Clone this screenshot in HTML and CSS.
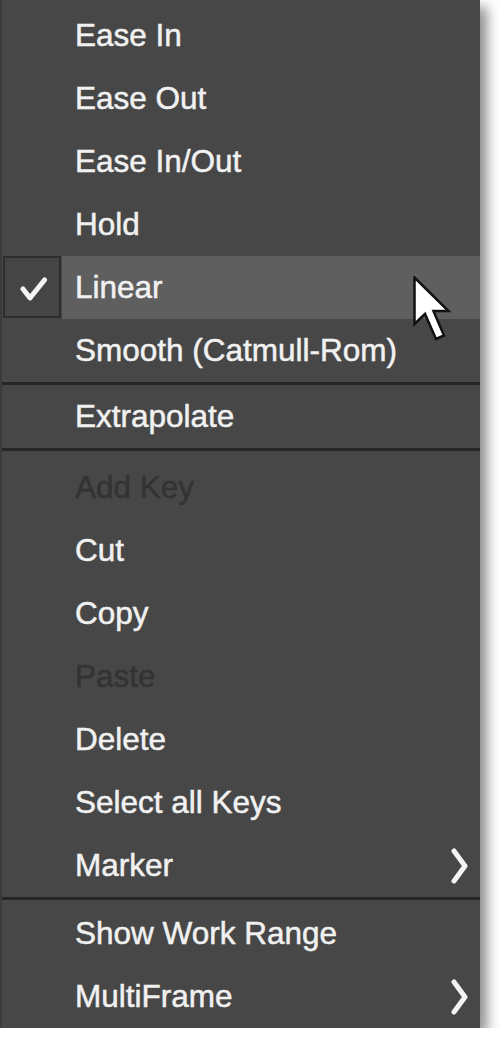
FILE: index.html
```html
<!DOCTYPE html>
<html>
<head>
<meta charset="utf-8">
<link rel="stylesheet" href="styles.css">
</head>
<body>
<div class="menu">
  <div class="item"><span class="icon"></span><span class="label">Ease In</span></div>
  <div class="item"><span class="icon"></span><span class="label">Ease Out</span></div>
  <div class="item"><span class="icon"></span><span class="label">Ease In/Out</span></div>
  <div class="item"><span class="icon"></span><span class="label">Hold</span></div>
  <div class="item active">
    <span class="icon check"><svg width="30" height="30" viewBox="0 0 30 30"><polyline points="6,17 13,26 27.5,8" fill="none" stroke="#f4f4f4" stroke-width="5" stroke-linecap="round" stroke-linejoin="round"/></svg></span>
    <span class="label">Linear</span>
  </div>
  <div class="item"><span class="icon"></span><span class="label">Smooth (Catmull-Rom)</span></div>
  <div class="sep sep-a"></div>
  <div class="item"><span class="icon"></span><span class="label">Extrapolate</span></div>
  <div class="sep sep-b"></div>
  <div class="item disabled"><span class="icon"></span><span class="label">Add Key</span></div>
  <div class="item"><span class="icon"></span><span class="label">Cut</span></div>
  <div class="item"><span class="icon"></span><span class="label">Copy</span></div>
  <div class="item disabled"><span class="icon"></span><span class="label">Paste</span></div>
  <div class="item"><span class="icon"></span><span class="label">Delete</span></div>
  <div class="item"><span class="icon"></span><span class="label">Select all Keys</span></div>
  <div class="item"><span class="icon"></span><span class="label">Marker<svg class="chev" width="20" height="36" viewBox="0 0 20 36"><polyline points="4,3 15,18 4,33" fill="none" stroke="#f4f4f4" stroke-width="5" stroke-linecap="round" stroke-linejoin="round"/></svg></span></div>
  <div class="sep sep-c"></div>
  <div class="item"><span class="icon"></span><span class="label">Show Work Range</span></div>
  <div class="item"><span class="icon"></span><span class="label">MultiFrame<svg class="chev" width="20" height="36" viewBox="0 0 20 36"><polyline points="4,3 15,18 4,33" fill="none" stroke="#f4f4f4" stroke-width="5" stroke-linecap="round" stroke-linejoin="round"/></svg></span></div>
  <svg class="cursor" width="40" height="68" viewBox="0 0 40 68"><polygon points="1.5,1.5 1.5,48 12,38 23,63 31,59.5 20.5,35 35.5,35" fill="#ffffff" stroke="#111111" stroke-width="2.5" stroke-linejoin="miter"/></svg>
</div>
</body>
</html>
```
FILE: styles.css
```css
html, body {
  margin: 0;
  padding: 0;
  background: #ffffff;
}

.menu {
  position: relative;
  width: 480px;
  box-sizing: border-box;
  padding-top: 4px;
  background: #474747;
  border-left: 2px solid #3b3b3b;
  box-shadow: 7px 7px 12px rgba(0, 0, 0, 0.45);
  font-family: "Liberation Sans", Arial, sans-serif;
  font-size: 31.5px;
  color: #f1f1f1;
}

.item {
  display: flex;
  height: 63px;
}

.icon {
  flex: none;
  width: 59px;
  display: flex;
  align-items: center;
  justify-content: center;
}

.label {
  flex: 1;
  display: flex;
  align-items: center;
  justify-content: space-between;
  padding-left: 14px;
  padding-right: 10px;
  white-space: nowrap;
  -webkit-text-stroke: 0.5px #f1f1f1;
}

.item.active .label {
  background: #5f5f5f;
  margin-left: 1px;
  padding-left: 13px;
}

.item.active .icon.check {
  box-sizing: border-box;
  margin: 0 0 1px 1px;
  width: 58px;
  border: 2px solid #2e2e2e;
  background: #454545;
}

.item.disabled .label {
  color: #333333;
  -webkit-text-stroke: 0.5px #333333;
}

.sep {
  border-top: 3px solid #262626;
  box-sizing: border-box;
}

.sep-a { height: 3px; }
.sep-b { height: 8px; }
.sep-c { height: 5px; }

.chev {
  flex: none;
}

.cursor {
  position: absolute;
  left: 411px;
  top: 276px;
}
```
